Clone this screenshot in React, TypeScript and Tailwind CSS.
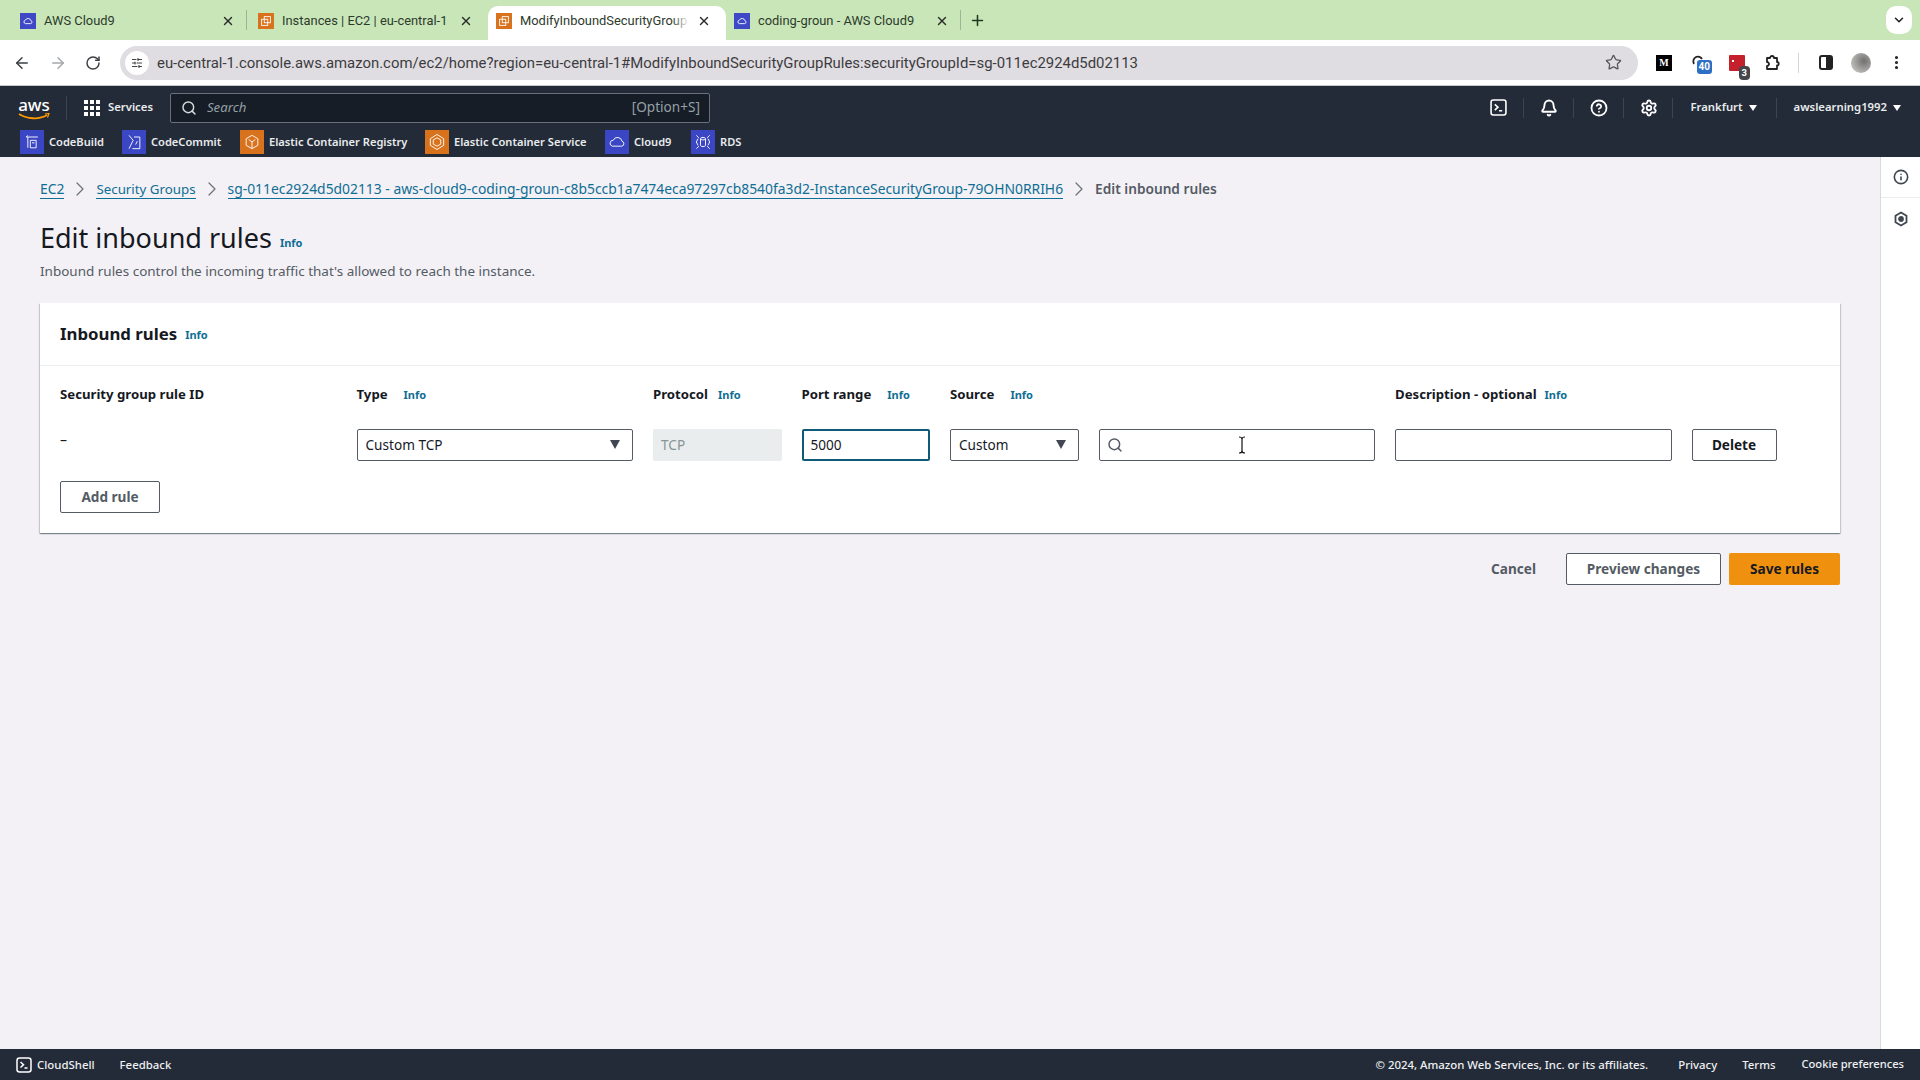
import { ArrowLeft, ArrowRight, RotateCw, Star, X, Plus, ChevronDown, ChevronRight, Search, EllipsisVertical, Info as InfoIcon, CircleHelp, Settings, Bell, SlidersHorizontal } from 'lucide-react';
import type { ReactNode } from 'react';

function Favicon({ kind }: { kind: 'c9' | 'ec2' }) {
  if (kind === 'c9') {
    return (
      <div className="flex h-4 w-4 shrink-0 items-center justify-center bg-[#3f49c6]">
        <svg viewBox="0 0 16 16" className="h-3 w-3" fill="none" stroke="white" strokeWidth="1.2">
          <path d="M4.5 11.5h7a2 2 0 0 0 .4-3.9A3.9 3.9 0 0 0 4.6 6.8a2.4 2.4 0 0 0-.1 4.7z" />
        </svg>
      </div>
    );
  }
  return (
    <div className="flex h-4 w-4 shrink-0 items-center justify-center bg-[#d9721c]">
      <svg viewBox="0 0 16 16" className="h-3.5 w-3.5" fill="none" stroke="white" strokeWidth="1">
        <rect x="6" y="3" width="7" height="7" />
        <rect x="3" y="6" width="7" height="7" />
      </svg>
    </div>
  );
}

function Tab({ kind, title, active, sep }: { kind: 'c9' | 'ec2'; title: string; active?: boolean; sep?: boolean }) {
  return (
    <div className={`relative flex h-[34px] w-[238px] shrink-0 items-center ${active ? 'rounded-t-[10px] bg-white' : ''} pb-[5px] pl-2 pr-[15px]`}>
      <Favicon kind={kind} />
      <span className="ml-2 min-w-0 flex-1 whitespace-nowrap text-[12.9px] text-[#2c3a2c] font-['Roboto',sans-serif]">{title}</span>
      {active && <div className="absolute right-[30px] top-[4px] h-5 w-[24px] bg-[linear-gradient(90deg,rgba(255,255,255,0),white_70%)]" />}
      <X className="relative ml-1 h-[14px] w-[14px] shrink-0 text-[#2b2b2b]" strokeWidth={2.4} />
      {sep && <div className="absolute right-[3px] top-[4px] h-5 w-px bg-[#9db596]" />}
    </div>
  );
}

function NavIconSep() {
  return <div className="h-5 w-px bg-[#3b4452]" />;
}

function ServiceIcon({ color, children }: { color: string; children: ReactNode }) {
  return (
    <div className={`flex h-6 w-6 shrink-0 items-center justify-center ${color}`}>
      <svg viewBox="0 0 24 24" className="h-5 w-5" fill="none" stroke="white" strokeWidth="1.1">
        {children}
      </svg>
    </div>
  );
}

function Shortcut({ color, label, icon, w }: { color: string; label: string; icon: ReactNode; w: string }) {
  return (
    <div className={`flex shrink-0 items-center gap-[5px] ${w}`}>
      <ServiceIcon color={color}>{icon}</ServiceIcon>
      <span className="whitespace-nowrap text-[11.1px] font-semibold text-[#e9ebed]">{label}</span>
    </div>
  );
}

function Info({ className = '' }: { className?: string }) {
  return <span className={`text-[11px] font-bold text-[#0f6e94] ${className}`}>Info</span>;
}

function Label({ children, gap = 'ml-[16px]', info = true }: { children: ReactNode; gap?: string; info?: boolean }) {
  return (
    <div className="flex items-center whitespace-nowrap">
      <span className="text-[13.2px] font-bold text-[#16191f]">{children}</span>
      {info && <Info className={gap} />}
    </div>
  );
}

function Caret() {
  return <div className="h-0 w-0 border-x-[5px] border-t-[9px] border-x-transparent border-t-[#414750]" />;
}

function Box({ className = '', children }: { className?: string; children?: ReactNode }) {
  return <div className={`flex h-8 items-center rounded-[2px] border border-[#545b64] bg-white text-[13.6px] text-[#16191f] ${className}`}>{children}</div>;
}

function Crumb({ size, children }: { size: string; children: ReactNode }) {
  return <span className={`whitespace-nowrap border-b border-[#0f6e94] leading-[18px] text-[#0f6e94] ${size}`}>{children}</span>;
}

function Sep() {
  return <ChevronRight className="mx-[4px] h-6 w-6 shrink-0 text-[#687078]" strokeWidth={1.2} />;
}

export default function App() {
  return (
    <div className="relative flex h-screen w-full flex-col overflow-hidden bg-[#f3f1f6] font-['Noto_Sans',sans-serif]">
      {/* chrome tabs */}
      <div className="flex h-10 shrink-0 items-end bg-[#c9e6b9] pl-3">
        <Tab kind="c9" title="AWS Cloud9" sep />
        <Tab kind="ec2" title="Instances | EC2 | eu-central-1" />
        <Tab kind="ec2" title="ModifyInboundSecurityGroup" active />
        <Tab kind="c9" title="coding-groun - AWS Cloud9" sep />
        <Plus className="mb-[11px] ml-[5px] h-[17px] w-[17px] text-[#1f3a1f]" strokeWidth={2.2} />
        <div className="flex-1" />
        <div className="mb-[6px] mr-2 flex h-7 w-[26px] items-center justify-center rounded-[10px] bg-white">
          <ChevronDown className="h-[14px] w-[14px] text-[#222]" strokeWidth={2.6} />
        </div>
      </div>

      {/* chrome toolbar */}
      <div className="flex h-[46px] shrink-0 items-center border-b border-[#c7c7c7] bg-white pl-[13px] font-['Roboto',sans-serif]">
        <ArrowLeft className="h-[18px] w-[18px] text-[#3c4043]" strokeWidth={2} />
        <ArrowRight className="ml-[18px] h-[18px] w-[18px] text-[#a5a8ab]" strokeWidth={2} />
        <RotateCw className="ml-[18px] h-[16px] w-[16px] text-[#3c4043]" strokeWidth={2.2} />
        <div className="ml-[19px] flex h-[34px] w-[1518px] items-center rounded-full bg-[#e0dde2] pl-[5px] pr-[16px]">
          <div className="flex h-6 w-6 items-center justify-center rounded-full bg-white">
            <SlidersHorizontal className="h-3 w-3 text-[#3c4043]" strokeWidth={2.2} />
          </div>
          <span className="ml-[8px] mt-px flex-1 whitespace-nowrap text-[14.9px] text-[#3c3c40]">eu-central-1.console.aws.amazon.com/ec2/home?region=eu-central-1#ModifyInboundSecurityGroupRules:securityGroupId=sg-011ec2924d5d02113</span>
          <Star className="h-[17px] w-[17px] text-[#55575b]" strokeWidth={1.8} />
        </div>
        <div className="ml-[18px] flex h-4 w-4 items-center justify-center bg-black font-['Liberation_Serif',serif] text-[10px] font-bold text-white">M</div>
        <div className="relative ml-[17px] h-5 w-5">
          <svg viewBox="0 0 20 20" className="h-5 w-5" fill="none" stroke="#222" strokeWidth="1.8">
            <path d="M5 11a5 5 0 0 1 2-7c2-1 5 0 6 2" />
          </svg>
          <span className="absolute -right-[3px] top-[7px] rounded-[3px] bg-[#2c6fc4] px-[2px] text-[10px] font-bold leading-[14px] text-white">40</span>
        </div>
        <div className="relative ml-[20px] h-4 w-4 rounded-[1px] bg-[#c5212d]">
          <div className="ml-[3px] mt-[5px] h-[2px] w-[2px] bg-white" />
          <span className="absolute -bottom-[9px] -right-[5px] rounded-[4px] bg-[#45464a] px-[3px] text-[9.5px] font-bold leading-[14px] text-white">3</span>
        </div>
        <svg viewBox="0 0 18 18" className="ml-[18px] h-[18px] w-[18px]" fill="none" stroke="#222" strokeWidth="1.8" strokeLinejoin="round">
          <path d="M4 4h3a2 2 0 0 1 4 0h3v4a1.600 1.600 0 0 1 0 3.500V15H4v-3a2 2 0 0 0 0-4z" />
        </svg>
        <div className="ml-[17px] h-5 w-px bg-[#d5d5d5]" />
        <div className="ml-[20px] h-[15px] w-[14px] rounded-[3px] border-2 border-[#222] bg-[linear-gradient(90deg,white_50%,#222_50%)]" />
        <div className="ml-[18px] h-5 w-5 rounded-full bg-[radial-gradient(circle_at_65%_40%,#6f6f6f,#b9b7b4_70%)]" />
        <EllipsisVertical className="ml-[17px] h-[17px] w-[17px] text-[#222]" strokeWidth={2.4} />
      </div>

      {/* aws nav */}
      <div className="flex h-[44px] shrink-0 items-center bg-[#232b38] pb-[1px] pl-[18px]">
        <div className="relative flex h-[24px] w-[32px] justify-center">
          <span className="text-[17px] font-medium leading-[18px] text-white">aws</span>
          <svg viewBox="0 0 32 8" className="absolute bottom-[-1px] left-0 h-2 w-8" fill="none">
            <path d="M1 1c8 5 20 6 28 1" stroke="#ff9900" strokeWidth="1.8" />
            <path d="M27 1l4-.5-1.5 4" stroke="#ff9900" strokeWidth="1.2" />
          </svg>
        </div>
        <div className="ml-[16px] h-6 w-px bg-[#3b4452]" />
        <div className="ml-[17px] grid h-4 w-4 grid-cols-3 gap-[2px]">
          {[...Array(9)].map((_, i) => <div key={i} className="bg-white" />)}
        </div>
        <span className="ml-[8px] text-[11.3px] font-semibold text-[#e9ebed]">Services</span>
        <div className="ml-[17px] flex h-[30px] w-[540px] items-center rounded-[2px] border border-[#687078] bg-[#161d26] pl-[10px] pr-[9px]">
          <Search className="h-4 w-4 text-[#d5dbdb]" strokeWidth={2.2} />
          <span className="ml-[10px] flex-1 text-[13.2px] italic text-[#95a0a6]">Search</span>
          <span className="text-[13.6px] text-[#95a0a6]">[Option+S]</span>
        </div>
        <div className="flex-1" />
        <svg viewBox="0 0 16 16" className="h-[17px] w-[17px]" fill="none" stroke="white" strokeWidth="1.5">
          <rect x="1" y="1" width="14" height="14" rx="2" />
          <path d="M4.5 5l3 2.7-3 2.8M8.5 11h3" />
        </svg>
        <div className="ml-[16px]"><NavIconSep /></div>
        <Bell className="ml-[16px] h-[18px] w-[18px] text-white" strokeWidth={2.5} />
        <div className="ml-[15px]"><NavIconSep /></div>
        <CircleHelp className="ml-[16px] h-[18px] w-[18px] text-white" strokeWidth={2.4} />
        <div className="ml-[15px]"><NavIconSep /></div>
        <Settings className="ml-[16px] h-[18px] w-[18px] text-white" strokeWidth={2.4} />
        <div className="ml-[14px]"><NavIconSep /></div>
        <span className="ml-[17px] text-[11.3px] font-semibold text-[#e9ebed]">Frankfurt</span>
        <div className="ml-[6px] h-0 w-0 border-x-[4px] border-t-[6px] border-x-transparent border-t-white" />
        <div className="ml-[19px]"><NavIconSep /></div>
        <span className="ml-[17px] text-[11.3px] font-semibold text-[#e9ebed]">awslearning1992</span>
        <div className="ml-[6px] mr-[19px] h-0 w-0 border-x-[4px] border-t-[6px] border-x-transparent border-t-white" />
      </div>

      {/* pinned services */}
      <div className="flex h-[27px] shrink-0 items-start bg-[#232b38] pl-5">
        <Shortcut color="bg-[#3a46c4]" label="CodeBuild" w="w-[102px]" icon={<><path d="M5 6h14M7 6v13M5 6l2-2M17 10v9h-7v-9z" /><path d="M12 13h3" /></>} />
        <Shortcut color="bg-[#3a46c4]" label="CodeCommit" w="w-[118px]" icon={<><path d="M6 4l5 6-5 10M10 20h9V6h-7" /><path d="M14 15l2-4" /></>} />
        <Shortcut color="bg-[#d9721c]" label="Elastic Container Registry" w="w-[185px]" icon={<><path d="M12 4l7 4v8l-7 4-7-4V8z" /><path d="M12 12v8M8 9l4 3 4-3" /></>} />
        <Shortcut color="bg-[#d9721c]" label="Elastic Container Service" w="w-[180px]" icon={<><path d="M12 3l8 5v8l-8 5-8-5V8z" /><path d="M12 7l4.500 2.500v5L12 17l-4.500-2.500v-5z" /></>} />
        <Shortcut color="bg-[#3a46c4]" label="Cloud9" w="w-[86px]" icon={<path d="M6.500 17h11a3 3 0 0 0 .5-5.900 5.500 5.500 0 0 0-10.500-1.200A3.600 3.600 0 0 0 6.500 17z" />} />
        <Shortcut color="bg-[#3a46c4]" label="RDS" w="w-[60px]" icon={<><ellipse cx="12" cy="8" rx="3" ry="1.500" /><path d="M9 8v8c0 2 6 2 6 0V8M6 8l-2 4 2 4M18 8l2 4-2 4M4 4l3 3M20 4l-3 3M4 20l3-3M20 20l-3-3" /></>} />
      </div>

      {/* body */}
      <div className="flex min-h-0 flex-1">
        <div className="min-w-0 flex-1 px-10 pt-[22px]">
          <div className="flex h-5 items-center">
            <Crumb size="text-[13.9px]">EC2</Crumb>
            <Sep />
            <Crumb size="text-[13.3px]">Security Groups</Crumb>
            <Sep />
            <Crumb size="text-[13.87px]">sg-011ec2924d5d02113 - aws-cloud9-coding-groun-c8b5ccb1a7474eca97297cb8540fa3d2-InstanceSecurityGroup-79OHN0RRIH6</Crumb>
            <Sep />
            <span className="whitespace-nowrap text-[13.7px] font-semibold text-[#545b64]">Edit inbound rules</span>
          </div>

          <div className="mt-[20px] flex h-[38px] items-center">
            <h1 className="whitespace-nowrap text-[27px] font-normal text-[#16191f]">Edit inbound rules</h1>
            <Info className="ml-2 mt-[11px]" />
          </div>
          <p className="mt-[4px] text-[13.47px] leading-5 text-[#545b64]">Inbound rules control the incoming traffic that's allowed to reach the instance.</p>

          {/* card */}
          <div className="mt-[22px] h-[230px] bg-white shadow-[0_1px_1px_0_rgba(0,28,36,0.3),1px_1px_1px_0_rgba(0,28,36,0.15),-1px_1px_1px_0_rgba(0,28,36,0.15)]">
            <div className="flex h-[63px] items-center border-b border-[#eaeded] pl-5">
              <h2 className="text-[16.8px] font-bold text-[#16191f]">Inbound rules</h2>
              <Info className="ml-2 mt-[3px]" />
            </div>
            <div className="px-5 pt-[19px]">
              <div className="grid grid-cols-[276.5px_276.5px_128.5px_128.5px_128.5px_276.5px_276.5px_auto] gap-x-5">
                <Label info={false}>Security group rule ID</Label>
                <Label>Type</Label>
                <Label gap="ml-[10px]">Protocol</Label>
                <Label>Port range</Label>
                <Label>Source</Label>
                <div />
                <Label gap="ml-2">Description - optional</Label>
                <div />
              </div>
              <div className="mt-[24px] grid grid-cols-[276.5px_276.5px_128.5px_128.5px_128.5px_276.5px_276.5px_auto] items-center gap-x-5">
                <span className="mb-[10px] text-[14px] text-[#16191f]">–</span>
                <Box className="justify-between pl-2 pr-3"><span>Custom TCP</span><Caret /></Box>
                <div className="flex h-8 items-center rounded-[2px] bg-[#eaeded] pl-2 text-[13.6px] text-[#879596]">TCP</div>
                <div className="flex h-8 items-center rounded-[2px] border-2 border-[#0f5a78] bg-white pl-[7px] text-[13.6px] text-[#16191f]">5000</div>
                <Box className="justify-between pl-2 pr-3"><span>Custom</span><Caret /></Box>
                <Box className="pl-[7px]"><Search className="h-4 w-4 text-[#545b64]" strokeWidth={2.2} /></Box>
                <Box />
                <Box className="w-[85px] justify-center font-bold text-[#545b64]">Delete</Box>
              </div>
              <div className="mt-[20px] flex h-8 w-[100px] items-center justify-center rounded-[2px] border border-[#545b64] text-[13.6px] font-bold text-[#545b64]">Add rule</div>
            </div>
          </div>

          {/* actions */}
          <div className="mt-[20px] flex items-center justify-end">
            <span className="text-[13.6px] font-bold text-[#545b64]">Cancel</span>
            <div className="ml-[30px] flex h-8 w-[155px] items-center justify-center rounded-[2px] border border-[#545b64] bg-white text-[13.6px] font-bold text-[#545b64]">Preview changes</div>
            <div className="ml-2 flex h-8 w-[111px] items-center justify-center rounded-[2px] bg-[#f0900f] text-[13.6px] font-bold text-[#16191f]">Save rules</div>
          </div>
        </div>

        {/* tools rail */}
        <div className="flex w-10 shrink-0 flex-col border-l border-[#d5dbdb] bg-white">
          <div className="flex h-[41px] items-center justify-center border-b border-[#eaeded]">
            <InfoIcon className="h-4 w-4 text-[#414750]" strokeWidth={2.4} />
          </div>
          <div className="flex h-[41px] items-center justify-center">
            <svg viewBox="0 0 16 16" className="h-4 w-4" fill="none" stroke="#414750" strokeWidth="1.8">
              <path d="M8 1.500l5.500 3.200v6.600L8 14.500l-5.500-3.200V4.700z" />
              <circle cx="8" cy="8" r="2" fill="#414750" />
            </svg>
          </div>
        </div>
      </div>

      {/* footer */}
      <div className="flex h-[31px] shrink-0 items-center bg-[#232b38] pl-4 pr-4 text-[11.4px] font-medium text-[#eef0f2]">
        <svg viewBox="0 0 16 16" className="h-4 w-4" fill="none" stroke="white" strokeWidth="1.500">
          <rect x="1" y="1" width="14" height="14" rx="2.500" />
          <path d="M4.500 5l3 2.700-3 2.800M8.500 11h3" />
        </svg>
        <span className="ml-[5px]">CloudShell</span>
        <span className="ml-[25px]">Feedback</span>
        <div className="flex-1" />
        <span>© 2024, Amazon Web Services, Inc. or its affiliates.</span>
        <span className="ml-[30px]">Privacy</span>
        <span className="ml-[25px]">Terms</span>
        <span className="ml-[26px] text-[11.15px]">Cookie preferences</span>
      </div>

      {/* mouse cursor */}
      <svg viewBox="0 0 10 18" className="absolute left-[1237px] top-[436px] h-[18px] w-[10px]" fill="none" stroke="#111" strokeWidth="1.200">
        <path d="M2 1c2 0 3 1 3 2v12c0 1-1 2-3 2M8 1c-2 0-3 1-3 2v12c0 1 1 2 3 2" />
      </svg>
    </div>
  );
}
